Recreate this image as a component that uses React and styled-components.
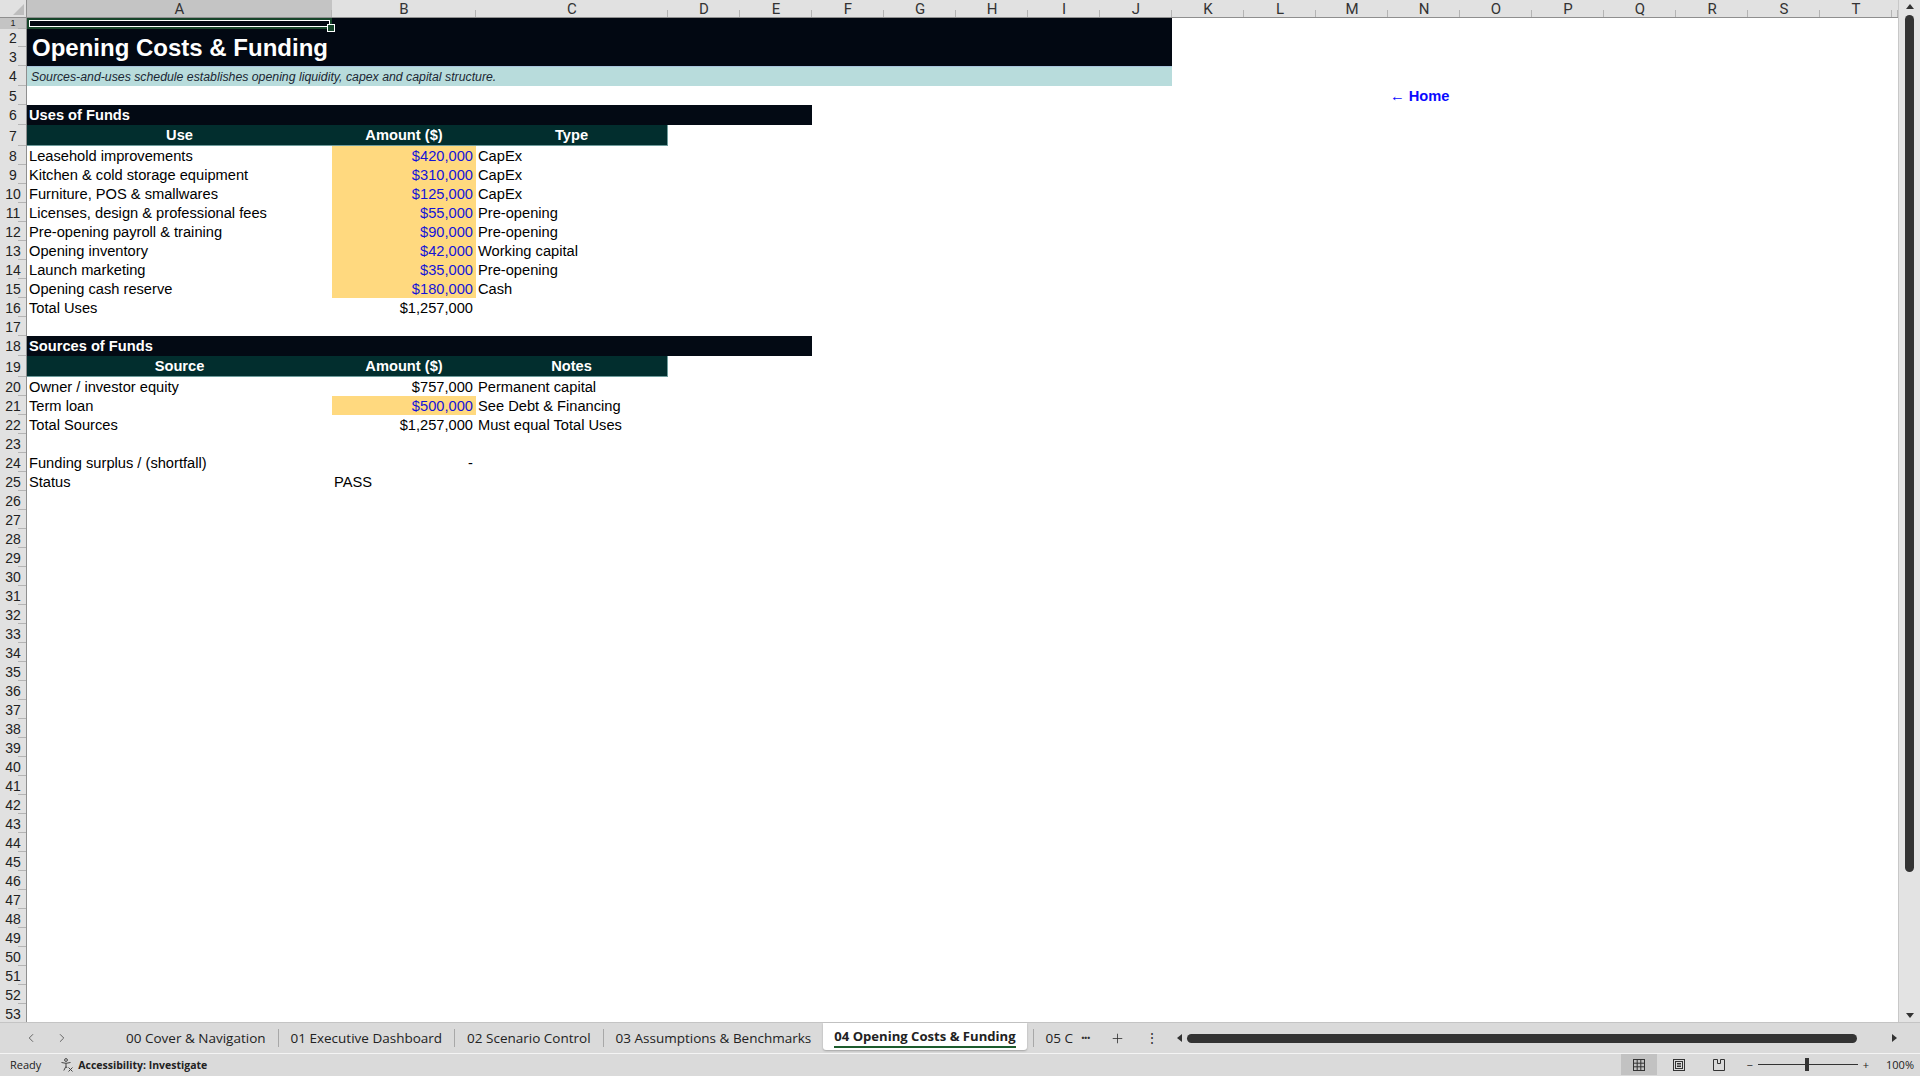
import React from "react";
import styled, { createGlobalStyle } from "styled-components";
import { ChevronLeft, ChevronRight, Plus } from "lucide-react";

const GlobalStyle = createGlobalStyle`
  html, body { margin: 0; padding: 0; background: #fff; }
  body { font-family: "Liberation Sans", Arial, sans-serif; overflow: hidden; }
  * { box-sizing: border-box; }
`;

const LETTERS = "ABCDEFGHIJKLMNOPQRST".split("");
const ROW_COUNT = 53;

//#region data
const uses = [
  ["Leasehold improvements", "$420,000", "CapEx"],
  ["Kitchen & cold storage equipment", "$310,000", "CapEx"],
  ["Furniture, POS & smallwares", "$125,000", "CapEx"],
  ["Licenses, design & professional fees", "$55,000", "Pre-opening"],
  ["Pre-opening payroll & training", "$90,000", "Pre-opening"],
  ["Opening inventory", "$42,000", "Working capital"],
  ["Launch marketing", "$35,000", "Pre-opening"],
  ["Opening cash reserve", "$180,000", "Cash"],
];

const sources = [
  ["Owner / investor equity", "$757,000", "Permanent capital", false],
  ["Term loan", "$500,000", "See Debt & Financing", true],
  ["Total Sources", "$1,257,000", "Must equal Total Uses", false],
];

const tabs = [
  "00 Cover & Navigation",
  "01 Executive Dashboard",
  "02 Scenario Control",
  "03 Assumptions & Benchmarks",
];
//#endregion

const Frame = styled.div`
  width: 1920px;
  height: 1076px;
  display: flex;
  flex-direction: column;
  background: #dadada;
  overflow: hidden;
`;

const SheetArea = styled.div`
  display: flex;
  height: 1023px;
  border-bottom: 1px solid #c4c4c4;
`;

// rows 6/7 and 18/19 are the taller section + header rows
const Sheet = styled.div`
  flex: 1;
  display: grid;
  background: #fff;
  grid-template-columns: 27px 305px 144px 192px repeat(17, 72px) 1fr;
  grid-template-rows:
    18px 11px 18px 19px 20px 19px 20px 21px repeat(10, 19px)
    20px 21px repeat(34, 19px) 1fr;
  font-family: "Liberation Sans", Arial, sans-serif;
  font-size: 14.67px;
  color: #000;
  overflow: hidden;
`;

const Corner = styled.div`
  grid-row: 1;
  grid-column: 1;
  background: #e1e1e1;
  border-bottom: 1px solid #8f8f8f;
  border-right: 1px solid #8f8f8f;
  position: relative;
  &::after {
    content: "";
    position: absolute;
    right: 2px;
    bottom: 2px;
    width: 11px;
    height: 11px;
    background: #bdbdbd;
    clip-path: polygon(100% 0, 100% 100%, 0 100%);
  }
`;

const ColHead = styled.div`
  grid-row: 1;
  grid-column: ${(p) => p.$col};
  background: ${(p) => (p.$active ? "#c4c4c4" : "#e1e1e1")};
  border-bottom: 1px solid #8f8f8f;
  display: flex;
  align-items: center;
  justify-content: center;
  font-family: Roboto, "Liberation Sans", sans-serif;
  font-size: 15px;
  color: #333;
  position: relative;
  &::after {
    content: "";
    position: absolute;
    right: 0;
    bottom: 0;
    width: 1px;
    height: 7px;
    background: #b4b4b4;
  }
`;

const RowHead = styled.div`
  grid-row: ${(p) => p.$row};
  grid-column: 1;
  background: ${(p) => (p.$active ? "#c4c4c4" : "#e1e1e1")};
  border-right: 1px solid #8f8f8f;
  display: flex;
  align-items: center;
  justify-content: center;
  font-family: "Liberation Sans", Arial, sans-serif;
  font-size: ${(p) => (p.$small ? "9px" : "14px")};
  line-height: 1;
  color: #222;
  overflow: hidden;
  position: relative;
  &::after {
    content: "";
    position: absolute;
    right: 0;
    bottom: 0;
    width: 8px;
    height: 1px;
    background: #b4b4b4;
  }
`;

const Band = styled.div`
  grid-row: ${(p) => p.$row};
  grid-column: ${(p) => p.$col};
  background: ${(p) => p.$bg};
  display: flex;
  align-items: center;
  white-space: nowrap;
`;

const TitleBand = styled(Band)`
  padding: 11px 0 0 5px;
  color: #fff;
  font-size: 24px;
  font-weight: 700;
`;

const SubtitleBand = styled(Band)`
  padding-left: 4px;
  font-size: 12.3px;
  font-style: italic;
  color: #1b2733;
  border-top: 1px solid #a9c4dc;
`;

const SectionBar = styled(Band)`
  padding-left: 2px;
  color: #fff;
  font-weight: 700;
`;

const SelectBox = styled.div`
  grid-row: 2;
  grid-column: 2;
  box-shadow: inset 0 0 0 2px #17452a, inset 0 0 0 3px #fff;
  position: relative;
  &::after {
    content: "";
    position: absolute;
    right: -3px;
    bottom: -3px;
    width: 6px;
    height: 6px;
    background: #17452a;
    border: 1px solid #fff;
  }
`;

const HeadCell = styled.div`
  grid-row: ${(p) => p.$row};
  grid-column: ${(p) => p.$col};
  background: #022e2e;
  color: #fff;
  font-weight: 700;
  display: flex;
  align-items: center;
  justify-content: center;
  border-bottom: 1px solid #6f9c9c;
  ${(p) => (p.$last ? "border-right: 1px solid #6f9c9c;" : "")}
`;

const TextCell = styled.div`
  grid-row: ${(p) => p.$row};
  grid-column: ${(p) => p.$col};
  display: flex;
  align-items: center;
  padding: 0 2px;
  white-space: nowrap;
`;

const AmountCell = styled.div`
  grid-row: ${(p) => p.$row};
  grid-column: 3;
  background: ${(p) => (p.$input ? "#ffd97f" : "transparent")};
  color: ${(p) => (p.$input ? "#1414d8" : "#000")};
  display: flex;
  align-items: center;
  justify-content: ${(p) => (p.$left ? "flex-start" : "flex-end")};
  padding: 0 3px 0 2px;
  white-space: nowrap;
`;

const LinkCell = styled.div`
  grid-row: ${(p) => p.$row};
  grid-column: ${(p) => p.$col};
  display: flex;
  align-items: center;
  padding-left: 2px;
  color: #0a0aff;
  font-weight: 700;
  white-space: nowrap;
`;

const VScroll = styled.div`
  width: 22px;
  background: #e3e3e3;
  border-left: 1px solid #c8c8c8;
  display: flex;
  flex-direction: column;
  align-items: center;
  padding: 4px 0;
`;

const VThumb = styled.div`
  width: 9px;
  height: 857px;
  margin-top: 6px;
  background: #333;
  border-radius: 5px;
`;

const Arrow = styled.div`
  width: 0;
  height: 0;
  border-left: 4px solid transparent;
  border-right: 4px solid transparent;
  ${(p) =>
    p.$dir === "up"
      ? "border-bottom: 5px solid #333;"
      : "border-top: 5px solid #333;"}
`;

const TabBar = styled.div`
  height: 30px;
  display: flex;
  align-items: center;
  background: #dadada;
  font-family: "Open Sans", "Liberation Sans", sans-serif;
  font-size: 13.5px;
  color: #222;
`;

const NavBtns = styled.div`
  width: 114px;
  display: flex;
  align-items: center;
  gap: 17px;
  padding-left: 24px;
  color: #555;
`;

const Tab = styled.div`
  height: ${(p) => (p.$active ? "27px" : "18px")};
  display: flex;
  align-items: center;
  padding: 0 12px;
  white-space: nowrap;
  align-self: ${(p) => (p.$active ? "flex-start" : "center")};
  border-left: ${(p) =>
    p.$first || p.$active || p.$afterActive ? "none" : "1px solid #a8a8a8"};
  ${(p) =>
    p.$active &&
    `
    background: #fff;
    font-weight: 700;
    font-size: 13.1px;
    padding: 0 11px;
    box-shadow: 0 1px 2px rgba(0,0,0,0.25);
    border-radius: 0 0 3px 3px;
  `}
  ${(p) =>
    p.$afterActive &&
    "margin-left: 6px; padding: 0 6px 0 12px; border-left: 1px solid #a8a8a8;"}
`;

const ActiveLabel = styled.span`
  border-bottom: 2px solid #1d5c2e;
  padding-bottom: 1px;
  margin-top: 2px;
`;

const TabTools = styled.div`
  display: flex;
  align-items: center;
  gap: 20px;
  color: #333;
  padding-left: 2px;
`;

const Dots = styled.span`
  font-weight: 700;
  letter-spacing: -1px;
`;

const HScroll = styled.div`
  flex: 1;
  display: flex;
  align-items: center;
  padding: 0 23px 0 18px;
  gap: 5px;
`;

const HThumb = styled.div`
  width: 670px;
  height: 9px;
  border-radius: 5px;
  background: #333;
`;

const SideArrow = styled.div`
  width: 0;
  height: 0;
  border-top: 4px solid transparent;
  border-bottom: 4px solid transparent;
  ${(p) =>
    p.$dir === "left"
      ? "border-right: 5px solid #333;"
      : "border-left: 5px solid #333;"}
`;

const StatusBar = styled.div`
  height: 22px;
  display: flex;
  align-items: center;
  background: #dadada;
  border-top: 1px solid #f4f4f4;
  font-family: "Open Sans", "Liberation Sans", sans-serif;
  font-size: 11px;
  color: #222;
`;

const StatusText = styled.span`
  padding-left: ${(p) => p.$pl || 0}px;
  font-weight: ${(p) => (p.$bold ? 700 : 400)};
  font-size: ${(p) => (p.$bold ? "10.5px" : "11px")};
  display: flex;
  align-items: center;
  gap: 4px;
`;

const Spacer = styled.div`
  flex: 1;
`;

const ViewBtn = styled.div`
  width: 36px;
  height: 21px;
  display: flex;
  align-items: center;
  justify-content: center;
  background: ${(p) => (p.$active ? "#c2c2c2" : "transparent")};
  margin-right: ${(p) => p.$mr || 0}px;
`;

const Zoom = styled.div`
  display: flex;
  align-items: center;
  gap: 5px;
  padding: 0 6px 0 6px;
  font-size: 11px;
`;

const Pct = styled.span`
  padding-left: 12px;
`;

const Slider = styled.div`
  width: 100px;
  height: 1px;
  background: #333;
  position: relative;
  &::after {
    content: "";
    position: absolute;
    left: 47px;
    top: -6px;
    width: 4px;
    height: 13px;
    background: #333;
  }
`;

function AccessIcon() {
  return (
    <svg width="14" height="14" viewBox="0 0 14 14" fill="none" stroke="#444" strokeWidth="1">
      <circle cx="6" cy="2" r="1.4" />
      <path d="M1.5 4.5 L6 5.3 L10.5 4.5" />
      <path d="M6 5.3 V8.3 L3.8 12.5" />
      <path d="M6 8.3 L7 10" />
      <path d="M8.5 9.5 L12.5 13.5 M12.5 9.5 L8.5 13.5" />
    </svg>
  );
}

function NormalIcon() {
  return (
    <svg width="14" height="14" viewBox="0 0 14 14" fill="none" stroke="#333" strokeWidth="1">
      <rect x="1.5" y="1.5" width="11" height="11" />
      <path d="M5.2 1.5 V12.5 M8.8 1.5 V12.5 M1.5 5.2 H12.5 M1.5 8.8 H12.5" />
    </svg>
  );
}

function LayoutIcon() {
  return (
    <svg width="14" height="14" viewBox="0 0 14 14" fill="none" stroke="#333" strokeWidth="1">
      <rect x="1.5" y="1.5" width="11" height="11" />
      <rect x="3.5" y="3.5" width="7" height="7" />
      <path d="M5 5.5 H9 M5 7 H9 M5 8.5 H9" />
    </svg>
  );
}

function BreakIcon() {
  return (
    <svg width="14" height="14" viewBox="0 0 14 14" fill="none" stroke="#333" strokeWidth="1">
      <path d="M1.5 1.5 H5.5 V5.5 H8.5 V1.5 H12.5 V12.5 H1.5 Z" />
    </svg>
  );
}

export default function App() {
  const rowHeads = [];
  for (let r = 1; r <= ROW_COUNT; r++) {
    rowHeads.push(
      <RowHead key={r} $row={r + 1} $active={r === 1} $small={r === 1}>
        {r}
      </RowHead>
    );
  }

  return (
    <Frame>
      <GlobalStyle />
      <SheetArea>
        <Sheet>
          <Corner />
          {LETTERS.map((l, i) => (
            <ColHead key={l} $col={i + 2} $active={i === 0}>
              {l}
            </ColHead>
          ))}
          <ColHead $col={22} />
          {rowHeads}

          <TitleBand $row="2 / 5" $col="2 / 12" $bg="#020812">
            Opening Costs &amp; Funding
          </TitleBand>
          <SelectBox />
          <SubtitleBand $row={5} $col="2 / 12" $bg="#b8dcdc">
            Sources-and-uses schedule establishes opening liquidity, capex and capital structure.
          </SubtitleBand>
          <LinkCell $row={6} $col={15}>← Home</LinkCell>

          <SectionBar $row={7} $col="2 / 7" $bg="#030a14">
            Uses of Funds
          </SectionBar>
          <HeadCell $row={8} $col={2}>Use</HeadCell>
          <HeadCell $row={8} $col={3}>Amount ($)</HeadCell>
          <HeadCell $row={8} $col={4} $last>Type</HeadCell>
          {uses.map((u, i) => (
            <React.Fragment key={u[0]}>
              <TextCell $row={9 + i} $col={2}>{u[0]}</TextCell>
              <AmountCell $row={9 + i} $input>{u[1]}</AmountCell>
              <TextCell $row={9 + i} $col={4}>{u[2]}</TextCell>
            </React.Fragment>
          ))}
          <TextCell $row={17} $col={2}>Total Uses</TextCell>
          <AmountCell $row={17}>$1,257,000</AmountCell>

          <SectionBar $row={19} $col="2 / 7" $bg="#030a14">
            Sources of Funds
          </SectionBar>
          <HeadCell $row={20} $col={2}>Source</HeadCell>
          <HeadCell $row={20} $col={3}>Amount ($)</HeadCell>
          <HeadCell $row={20} $col={4} $last>Notes</HeadCell>
          {sources.map((s, i) => (
            <React.Fragment key={s[0]}>
              <TextCell $row={21 + i} $col={2}>{s[0]}</TextCell>
              <AmountCell $row={21 + i} $input={s[3]}>{s[1]}</AmountCell>
              <TextCell $row={21 + i} $col={4}>{s[2]}</TextCell>
            </React.Fragment>
          ))}

          <TextCell $row={25} $col={2}>Funding surplus / (shortfall)</TextCell>
          <AmountCell $row={25}>-</AmountCell>
          <TextCell $row={26} $col={2}>Status</TextCell>
          <AmountCell $row={26} $left>PASS</AmountCell>
        </Sheet>
        <VScroll>
          <Arrow $dir="up" />
          <VThumb />
          <Spacer />
          <Arrow $dir="down" />
        </VScroll>
      </SheetArea>

      <TabBar>
        <NavBtns>
          <ChevronLeft size={14} strokeWidth={1.5} />
          <ChevronRight size={14} strokeWidth={1.5} />
        </NavBtns>
        {tabs.map((t, i) => (
          <Tab key={t} $first={i === 0}>
            {t}
          </Tab>
        ))}
        <Tab $active>
          <ActiveLabel>04 Opening Costs &amp; Funding</ActiveLabel>
        </Tab>
        <Tab $afterActive>05 C</Tab>
        <TabTools>
          <Dots>···</Dots>
          <Plus size={15} strokeWidth={1.3} />
          <span>⋮</span>
        </TabTools>
        <HScroll>
          <SideArrow $dir="left" />
          <HThumb />
          <Spacer />
          <SideArrow $dir="right" />
        </HScroll>
      </TabBar>

      <StatusBar>
        <StatusText $pl={10}>Ready</StatusText>
        <StatusText $pl={19} $bold>
          <AccessIcon />
          Accessibility: Investigate
        </StatusText>
        <Spacer />
        <ViewBtn $active $mr={4}>
          <NormalIcon />
        </ViewBtn>
        <ViewBtn $mr={4}>
          <LayoutIcon />
        </ViewBtn>
        <ViewBtn $mr={3}>
          <BreakIcon />
        </ViewBtn>
        <Zoom>
          <span>−</span>
          <Slider />
          <span>+</span>
          <Pct>100%</Pct>
        </Zoom>
      </StatusBar>
    </Frame>
  );
}
